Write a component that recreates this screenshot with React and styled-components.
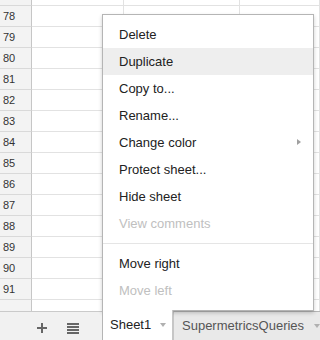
import React from "react";
import styled, { createGlobalStyle } from "styled-components";

const GlobalStyle = createGlobalStyle`
  html, body { margin: 0; padding: 0; background: #fff; overflow: hidden; }
  * { box-sizing: border-box; }
`;

const Page = styled.div`
  position: relative;
  width: 320px;
  height: 340px;
  display: flex;
  flex-direction: column;
  font-family: Arial, "Liberation Sans", sans-serif;
  overflow: hidden;
`;

const Grid = styled.div`
  flex: 1;
  display: flex;
  flex-direction: column;
  overflow: hidden;
`;

const Row = styled.div`
  display: grid;
  grid-template-columns: 32px 92px 116px 1fr;
  height: ${(p) => (p.$h ? `${p.$h}px` : "auto")};
  flex: ${(p) => (p.$fill ? 1 : "none")};
`;

const HeadCell = styled.div`
  background: #f3f3f3;
  border-right: 1px solid #c6c6c6;
  border-bottom: ${(p) => (p.$open ? "none" : "1px solid #d9d9d9")};
  color: #333;
  font-size: 11px;
  line-height: 20px;
  padding-left: 3px;
`;

const Cell = styled.div`
  border-right: 1px solid #e2e2e2;
  border-bottom: ${(p) => (p.$open ? "none" : "1px solid #e2e2e2")};
`;

const Bar = styled.div`
  height: 29px;
  flex: none;
  display: flex;
  background: #f1f1f1;
  border-top: 1px solid #cacaca;
`;

const Tools = styled.div`
  width: 102px;
  flex: none;
  display: flex;
  align-items: center;
  gap: 20px;
  padding: 4px 0 0 37px;
  color: #666;
`;

const Tab = styled.div`
  position: relative;
  z-index: ${(p) => (p.$active ? 3 : 1)};
  margin-top: ${(p) => (p.$active ? "-2px" : "-1px")};
  height: ${(p) => (p.$active ? "31px" : "30px")};
  width: ${(p) => (p.$w ? `${p.$w}px` : "auto")};
  flex: ${(p) => (p.$w ? "none" : 1)};
  display: flex;
  align-items: flex-start;
  padding: ${(p) => (p.$active ? "6px 0 0 7px" : "5px 0 0 8px")};
  background: ${(p) => (p.$active ? "#fff" : "#e9e9e9")};
  border-left: 1px solid ${(p) => (p.$active ? "#b5b5b5" : "#c6c6c6")};
  border-right: ${(p) => (p.$active ? "1px solid #c6c6c6" : "none")};
  border-top: ${(p) => (p.$active ? "none" : "1px solid #b5b5b5")};
  color: ${(p) => (p.$active ? "#222" : "#555")};
  font-size: 13px;
  line-height: 18px;
  white-space: nowrap;
`;

const TabLabel = styled.span`
  flex: none;
`;

const TabArrow = styled.span`
  margin-left: ${(p) => p.$gap}px;
  margin-top: 7px;
  width: 0;
  height: 0;
  border-left: 3.5px solid transparent;
  border-right: 3.5px solid transparent;
  border-top: 4px solid #b0b0b0;
`;

const Menu = styled.div`
  position: absolute;
  z-index: 2;
  left: 102px;
  top: 14px;
  width: 212px;
  height: 297px;
  background: #fff;
  border: 1px solid #b5b5b5;
  box-shadow: 0 2px 4px rgba(0, 0, 0, 0.2);
  padding: 6px 0;
`;

const Item = styled.div`
  position: relative;
  height: 27px;
  line-height: 27px;
  padding-left: 16px;
  font-size: 13px;
  color: ${(p) => (p.$disabled ? "#c0c0c0" : "#222")};
  background: ${(p) => (p.$hover ? "#eeeeee" : "transparent")};
  white-space: nowrap;
`;

const SubArrow = styled.span`
  position: absolute;
  right: 12px;
  top: 10px;
  width: 0;
  height: 0;
  border-top: 3.5px solid transparent;
  border-bottom: 3.5px solid transparent;
  border-left: 4px solid #a0a0a0;
`;

const Separator = styled.div`
  margin: 6px 0;
  border-top: 1px solid #e5e5e5;
`;

const PlusIcon = () => (
  <svg width="10" height="10" viewBox="0 0 10 10">
    <rect x="4" y="0" width="2" height="10" fill="#666" />
    <rect x="0" y="4" width="10" height="2" fill="#666" />
  </svg>
);

const ListIcon = () => (
  <svg width="12" height="11" viewBox="0 0 12 11">
    {[0, 3, 6, 9].map((y) => (
      <rect key={y} x="0" y={y} width="12" height="2" fill="#666" />
    ))}
  </svg>
);

const rows = [78, 79, 80, 81, 82, 83, 84, 85, 86, 87, 88, 89, 90, 91];

const items = [
  { label: "Delete" },
  { label: "Duplicate", hover: true },
  { label: "Copy to..." },
  { label: "Rename..." },
  { label: "Change color", sub: true },
  { label: "Protect sheet..." },
  { label: "Hide sheet" },
  { label: "View comments", disabled: true },
  { sep: true },
  { label: "Move right" },
  { label: "Move left", disabled: true },
];

export default function App() {
  return (
    <>
      <GlobalStyle />
      <Page>
        <Grid>
          <Row $h={6}>
            <HeadCell />
            <Cell />
            <Cell />
            <Cell />
          </Row>
          {rows.map((n) => (
            <Row key={n} $h={21}>
              <HeadCell>{n}</HeadCell>
              <Cell />
              <Cell />
              <Cell />
            </Row>
          ))}
          <Row $fill>
            <HeadCell $open />
            <Cell $open />
            <Cell $open />
            <Cell $open />
          </Row>
        </Grid>
        <Bar>
          <Tools>
            <PlusIcon />
            <ListIcon />
          </Tools>
          <Tab $active $w={71}>
            <TabLabel>Sheet1</TabLabel>
            <TabArrow $gap={9} />
          </Tab>
          <Tab>
            <TabLabel>SupermetricsQueries</TabLabel>
            <TabArrow $gap={10} />
          </Tab>
        </Bar>
        <Menu>
          {items.map((it, i) =>
            it.sep ? (
              <Separator key={i} />
            ) : (
              <Item key={i} $hover={it.hover} $disabled={it.disabled}>
                {it.label}
                {it.sub && <SubArrow />}
              </Item>
            )
          )}
        </Menu>
      </Page>
    </>
  );
}
